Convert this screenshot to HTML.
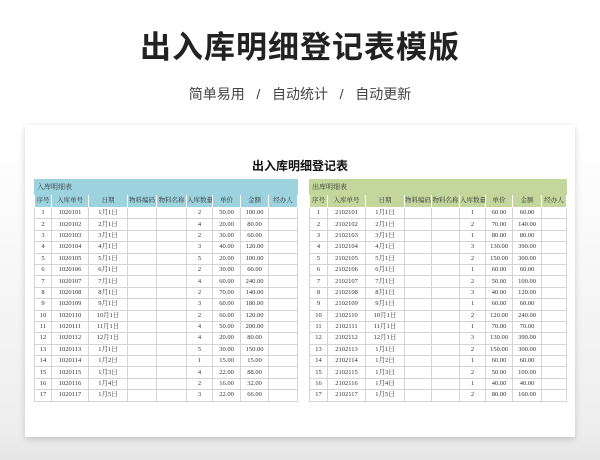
<!DOCTYPE html><html><head><meta charset="utf-8"><style>
*{margin:0;padding:0;box-sizing:border-box}
body{width:600px;height:460px;background:#fff;font-family:"Liberation Serif","Noto Serif CJK SC",serif;position:relative;overflow:hidden}
.h1{position:absolute;top:22px;left:0;width:600px;text-align:center;font:bold 31px "Liberation Sans","Noto Sans CJK SC",sans-serif;color:#222;letter-spacing:1px}
.sub{position:absolute;top:84px;left:0;width:600px;text-align:center;font:14px "Liberation Sans","Noto Sans CJK SC",sans-serif;color:#444}
.bg{position:absolute;top:135px;left:0;width:600px;height:325px;background:linear-gradient(#fff,#eee 90%,#e6e6e6)}
.card{position:absolute;left:25px;top:125px;width:550px;height:312px;background:#fff;box-shadow:0 2px 6px rgba(0,0,0,.18)}
.t{position:absolute;top:157px;left:0;width:600px;text-align:center;font:bold 12px "Liberation Sans","Noto Sans CJK SC",sans-serif;color:#111}
table{position:absolute;border-collapse:collapse;font-size:6.5px;line-height:8px;color:#333;table-layout:fixed}
td{border:1px solid #d4d4d4;text-align:center;height:11.4px;padding:0;white-space:nowrap;overflow:hidden;vertical-align:middle}
.cap td{text-align:left;padding-left:2px;height:15px;font-size:7px}
.hd td{height:13px}
</style></head><body>
<div class="h1">出入库明细登记表模版</div>
<div class="sub">简单易用 &nbsp; / &nbsp; 自动统计 &nbsp; / &nbsp; 自动更新</div>
<div class="bg"></div><div class="card"></div>
<div class="t">出入库明细登记表</div>
<table id="L" style="left:34px;top:179px;width:263px"></table>
<table id="R" style="left:309px;top:179px;width:257px"></table>
<script>
function build(id,cap,col,pre,q,p,dates,widths){
 var h='<colgroup>'+widths.map(w=>'<col style="width:'+w+'px">').join('')+'</colgroup>';
 h+='<tr class="cap"><td colspan="9" style="background:'+col+';border-color:'+col+'">'+cap+'</td></tr>';
 h+='<tr class="hd">'+['序号','入库单号','日期','物料编码','物料名称','入库数量','单价','金额','经办人'].map(x=>'<td style="background:'+col+';border-color:#fff">'+x+'</td>').join('')+'</tr>';
 for(var i=0;i<17;i++){var n=i+1;h+='<tr><td>'+n+'</td><td>'+pre+(n<10?'0'+n:n)+'</td><td>'+dates[i]+'</td><td></td><td></td><td>'+q[i]+'</td><td>'+p[i].toFixed(2)+'</td><td>'+(q[i]*p[i]).toFixed(2)+'</td><td></td></tr>';}
 document.getElementById(id).innerHTML=h;
}
var d=[];for(var i=1;i<=12;i++)d.push(i+'月1日');for(i=1;i<=5;i++)d.push('1月'+i+'日');
build('L','入库明细表','#9dd2df','10201',[2,4,2,3,5,2,4,2,3,2,4,4,5,1,4,2,3],[50,20,30,40,20,30,60,70,60,60,50,20,30,15,22,16,22],d,[17,37,39,29,30,26,28,28,29]);
build('R','出库明细表','#c3d79d','21021',[1,2,1,3,2,1,2,3,1,2,1,3,2,1,2,1,2],[60,70,80,130,150,60,50,40,60,120,70,130,150,60,50,40,80],d,[18,38,39,27,28,26,27,29,25]);
</script>
</body></html>
